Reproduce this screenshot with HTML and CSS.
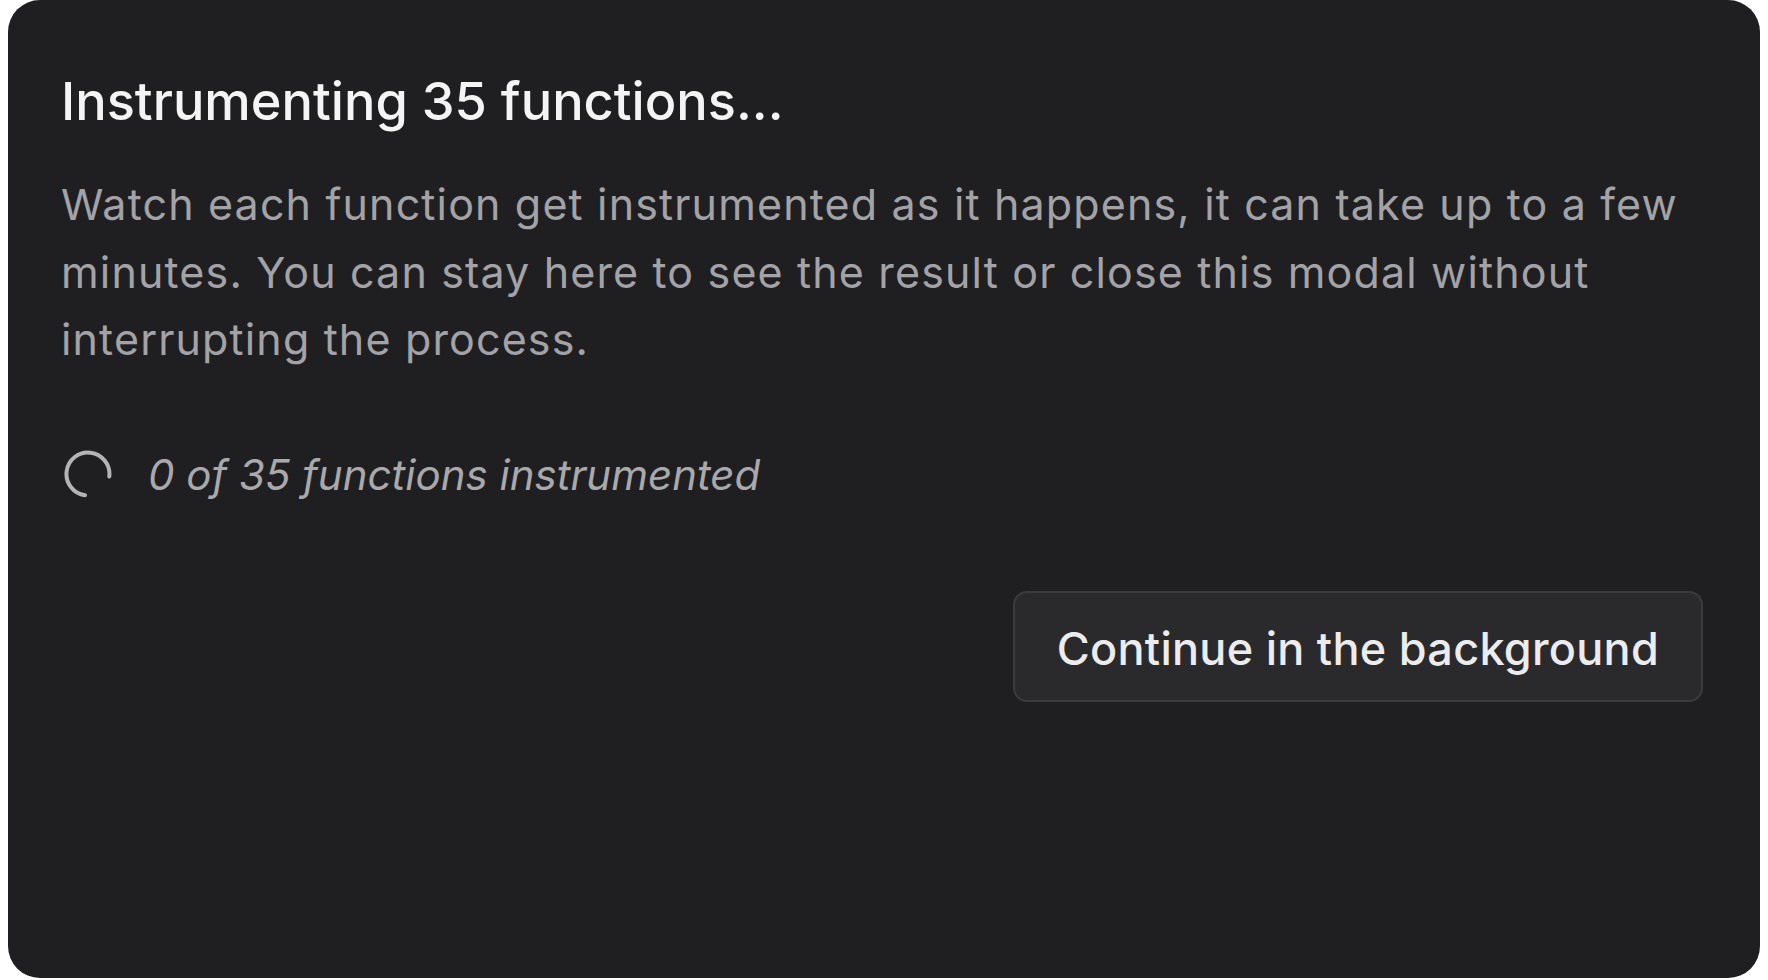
FILE: index.html
```html
<!DOCTYPE html>
<html lang="en">
<head>
    <meta charset="UTF-8">
    <meta name="viewport" content="width=device-width, initial-scale=1.0">
    <title>Instrumenting functions</title>
    <link rel="stylesheet" href="styles.css">
</head>
<body>
    <div class="modal">
        <h1 class="modal-title">Instrumenting 35 functions...</h1>
        <p class="modal-text">Watch each function get instrumented as it happens, it can take up to a few minutes. You can stay here to see the result or close this modal without interrupting the process.</p>

        <div class="progress">
            <svg class="spinner" viewBox="0 0 48 48" width="48" height="48">
                <!-- open ring, gap at the lower right -->
                <path d="M45.3 26.5 A21.5 21.5 0 1 0 21 45.3" fill="none" stroke="#b4b4b6" stroke-width="4" stroke-linecap="round"/>
            </svg>
            <span class="progress-text">0 of 35 functions instrumented</span>
        </div>

        <div class="actions">
            <button class="btn">Continue in the background</button>
        </div>
    </div>
</body>
</html>
```

FILE: styles.css
```css
body {
    margin: 0;
    padding: 0;
    background-color: #ffffff;
    font-family: Inter, "Noto Sans", sans-serif;
}

.modal {
    box-sizing: border-box;
    height: 978px;
    margin: 0 8px;
    padding: 69px 57px 0 53px;
    background-color: #1f1f21;
    border-radius: 32px;
}

.modal-title {
    margin: 0;
    font-size: 52.3px;
    font-weight: 500;
    line-height: 64px;
    color: #f4f4f5;
}

.modal-text {
    margin: 38px 0 0;
    font-size: 43px;
    letter-spacing: 1.15px;
    line-height: 67.5px;
    color: #a3a3a7;
}

.progress {
    display: flex;
    align-items: center;
    gap: 36px;
    margin-top: 75px;
    padding-left: 3px;
}

.spinner {
    display: block;
    flex-shrink: 0;
}

.progress-text {
    font-size: 42px;
    font-style: italic;
    color: #a9a9ac;
}

.actions {
    display: flex;
    justify-content: flex-end;
    margin-top: 91px;
}

.btn {
    height: 111px;
    padding: 4px 42px 0;
    font-family: inherit;
    font-size: 45px;
    font-weight: 500;
    letter-spacing: 0.27px;
    color: #ececee;
    background-color: #2a2a2d;
    border: 2px solid #3b3b3e;
    border-radius: 14px;
    cursor: pointer;
}
```
